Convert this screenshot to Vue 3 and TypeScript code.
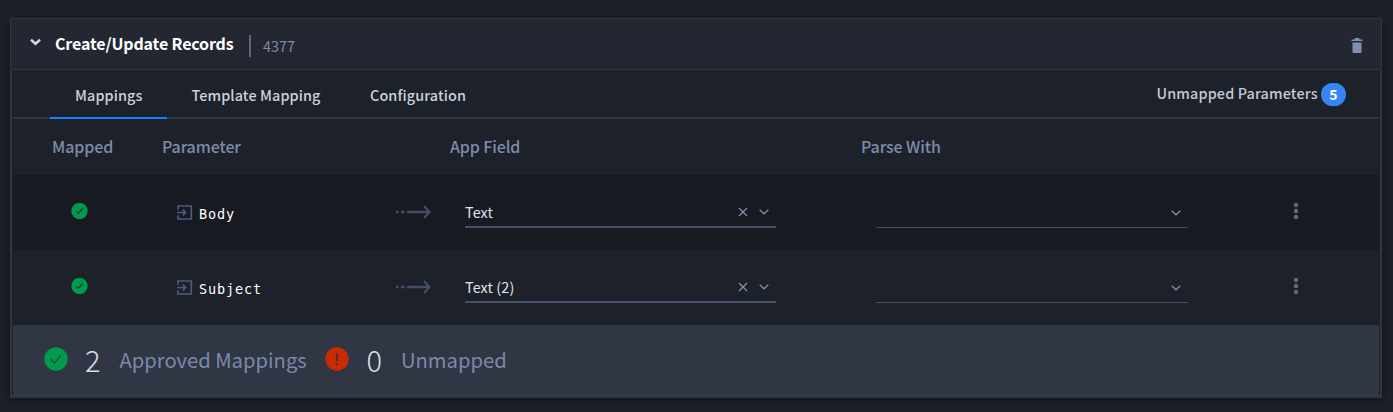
<script setup lang="ts">
interface Mapping {
  parameter: string
  field: string
}

const tabs: string[] = ['Mappings', 'Template Mapping', 'Configuration']
const mappings: Mapping[] = [
  { parameter: 'Body', field: 'Text' },
  { parameter: 'Subject', field: 'Text (2)' },
]
</script>

<template>
  <main class="page">
    <section class="card">
      <header class="card-header">
        <svg class="collapse" width="12" height="8" viewBox="0 0 12 8"><path d="M1 1.8 5.500 5.800 10 1.800" /></svg>
        <h1 class="title">Create/Update Records</h1>
        <span class="rule"></span>
        <span class="record-id">4377</span>
        <svg class="trash" width="12" height="16" viewBox="0 0 12 16">
          <path d="M4 0h4l.7 1.5H11.500V3H.5V1.500h2.800zM1.500 4.500h9V14q0 1-1 1h-7q-1 0-1-1z" />
        </svg>
      </header>

      <div class="card-body">
        <nav class="tabs">
          <a v-for="(tab, i) in tabs" :key="tab" class="tab" :class="['tab-' + i, { active: i === 0 }]"><span>{{ tab }}</span></a>
          <div class="unmapped"><span class="unmapped-label">Unmapped Parameters</span><span class="badge">5</span></div>
        </nav>

        <div class="row head">
          <span class="th mapped">Mapped</span>
          <span class="th parameter">Parameter</span>
          <span></span>
          <span class="th field">App Field</span>
          <span class="th parse">Parse With</span>
        </div>

        <div v-for="m in mappings" :key="m.parameter" class="row item">
          <div class="status">
            <svg width="17" height="16" viewBox="0 0 17 16"><circle cx="8.500" cy="8" r="8.200" fill="#009a4e" /><path d="m5 8.200 2.200 2.300 4.800-5" fill="none" stroke="#1b3b35" stroke-width="1.200" /></svg>
          </div>
          <div class="param">
            <svg width="16" height="15" viewBox="0 0 16 15" fill="none" stroke="#4c5b7d" stroke-width="1.700"><path d="M1 4.800V1h13.300v13H1V10.200M0 7.500h8.500M5.800 4.700 8.600 7.500l-2.800 2.800" /></svg>
            <code>{{ m.parameter }}</code>
          </div>
          <div class="flow">
            <svg width="36" height="14" viewBox="0 0 36 14" fill="none" stroke="#424d66" stroke-width="2.400"><path d="M1 7h2.500M6 7h3.500M12 7h22" /><path d="m29 1 5.500 6L29 13" stroke-width="2.200" /></svg>
          </div>
          <div class="cell">
            <div class="select filled">
              <span class="value">{{ m.field }}</span>
              <svg class="clear" width="10" height="10" viewBox="0 0 10 10"><path d="m1 1 8 8M9 1 1 9" /></svg>
              <svg class="chevron" width="10" height="6" viewBox="0 0 10 6"><path d="m.7.700 4.300 4.100L9.300.7" /></svg>
            </div>
          </div>
          <div class="cell">
            <div class="select">
              <svg class="chevron" width="10" height="6" viewBox="0 0 10 6"><path d="m.7.700 4.300 4.100L9.300.7" /></svg>
            </div>
          </div>
          <div class="more">
            <svg width="6" height="16" viewBox="0 0 6 16" fill="#5b6a8b"><circle cx="3" cy="2" r="2.200" /><circle cx="3" cy="8" r="2.200" /><circle cx="3" cy="14" r="2.200" /></svg>
          </div>
        </div>

        <footer class="summary">
          <svg width="24" height="24" viewBox="0 0 24 24"><circle cx="12" cy="12" r="11.700" fill="#009a4e" /><path d="m6.500 12 3.800 4.100 7-8" fill="none" stroke="#284243" stroke-width="1.300" /></svg>
          <span class="count">2</span>
          <span class="label approved">Approved Mappings</span>
          <svg width="24" height="24" viewBox="0 0 24 24"><circle cx="12" cy="12" r="11.700" fill="#c92a00" /><path d="M12 6v8M12 16.200v2" stroke="#4b3038" stroke-width="1.800" /></svg>
          <span class="count">0</span>
          <span class="label">Unmapped</span>
        </footer>
      </div>
    </section>
  </main>
</template>

<style>
body { background: #1c2028; }
</style>

<style scoped>
* { box-sizing: border-box; }
svg { display: block; flex: none; }
.page {
  height: 412px;
  padding: 18px 11px 0 10px;
  overflow: hidden;
  background: #1c2028;
  font-family: "Noto Sans CJK SC", "Noto Sans", sans-serif;
  white-space: nowrap;
}
.card {
  height: 380px;
  border: 1px solid #2f3543;
  background: #1d2129;
  box-shadow: 0 2px 8px rgba(0, 0, 0, .4);
}
.card-header {
  display: flex;
  height: 51px;
  padding-left: 19px;
  border-bottom: 1px solid #2f3543;
  background: #232731;
}
.collapse { margin-top: 19px; fill: none; stroke: #d2d9e5; stroke-width: 2.500; }
.title { margin: 12px 0 0 13px; width: 194px; color: #fff; font-size: 16px; font-weight: 700; line-height: 24px; letter-spacing: -.14px; }
.rule { width: 2px; height: 22px; margin-top: 16px; background: #5d677b; }
.record-id { margin: 15px 0 0 12px; color: #7d8cae; font-size: 14.400px; line-height: 24px; }
.trash { margin: 19px 18px 0 auto; fill: #8190b0; }
.card-body {
  height: 327px;
  padding: 0 1px;
  border: 1px solid #2f3543;
  border-top: 0;
}
.tabs { display: flex; height: 49px; padding-left: 37px; border-bottom: 2px solid #303645; }
.tab { height: 49px; padding-top: 13px; color: #cbd2dc; font-size: 14.400px; font-weight: 500; line-height: 24px; letter-spacing: .1px; }
.tab-0 { width: 117px; padding-left: 25px; }
.tab-1 { width: 178px; padding-left: 24.500px; }
.tab-2 { padding-left: 25px; }
.active { border-bottom: 2px solid #1480ff; }
.unmapped { display: flex; margin-left: auto; padding: 11px 33px 0 0; color: #c5cad2; font-size: 14.400px; font-weight: 500; line-height: 24px; letter-spacing: .14px; }
.unmapped-label { width: 164.500px; }
.badge { width: 25px; height: 23px; margin-top: 2px; border-radius: 12px; background: #3784f3; color: #fff; font-size: 14px; font-weight: 700; line-height: 23px; text-align: center; }
.row { display: grid; grid-template-columns: 140px 242px 45px 411px 412px 1fr; }
.head { height: 56px; padding-top: 15px; }
.th { color: #7e8bab; font-size: 16px; font-weight: 500; line-height: 24px; letter-spacing: -.11px; }
.mapped { padding-left: 39px; }
.parameter { padding-left: 9px; }
.field { padding-left: 10px; }
.parse { padding-left: 10px; }
.item { height: 75px; background: #1d2129; }
.item:nth-child(odd) { background: #171a21; }
.status { padding: 28px 0 0 58px; }
.param { display: flex; padding: 30px 0 0 24px; }
.param code { margin: -3px 0 0 6px; color: #fff; font-family: "DejaVu Sans Mono", monospace; font-size: 13.500px; line-height: 24px; letter-spacing: .88px; }
.flow svg { margin-top: 29.500px; }
.cell { padding: 24px 75px 0 25px; }
.select { display: flex; height: 29px; border-bottom: 1px solid #465069; }
.filled { border-bottom-width: 2px; }
.value { margin-top: 1px; color: #e1e5eb; font-size: 14.400px; line-height: 24px; letter-spacing: .1px; }
.clear, .chevron { fill: none; stroke: #8491b2; stroke-width: 1.200; }
.clear { margin: 7.500px 0 0 auto; }
.chevron { margin: 10px 7px 0 11px; }
.select:not(.filled) .chevron { margin-left: auto; margin-top: 11px; }
.more { padding: 28px 0 0 30px; }
.summary { display: flex; height: 71px; padding: 22px 0 0 30.500px; background: #303643; border-bottom: 1px solid #353d4b; }
.count { width: 35px; padding-left: 17.500px; color: #d8dee8; font-size: 29px; font-weight: 300; line-height: 24px; }
.label { margin: 1px 0 0 17px; color: #7c89a9; font-size: 20.200px; line-height: 24px; }
.approved { width: 205.500px; }
</style>
